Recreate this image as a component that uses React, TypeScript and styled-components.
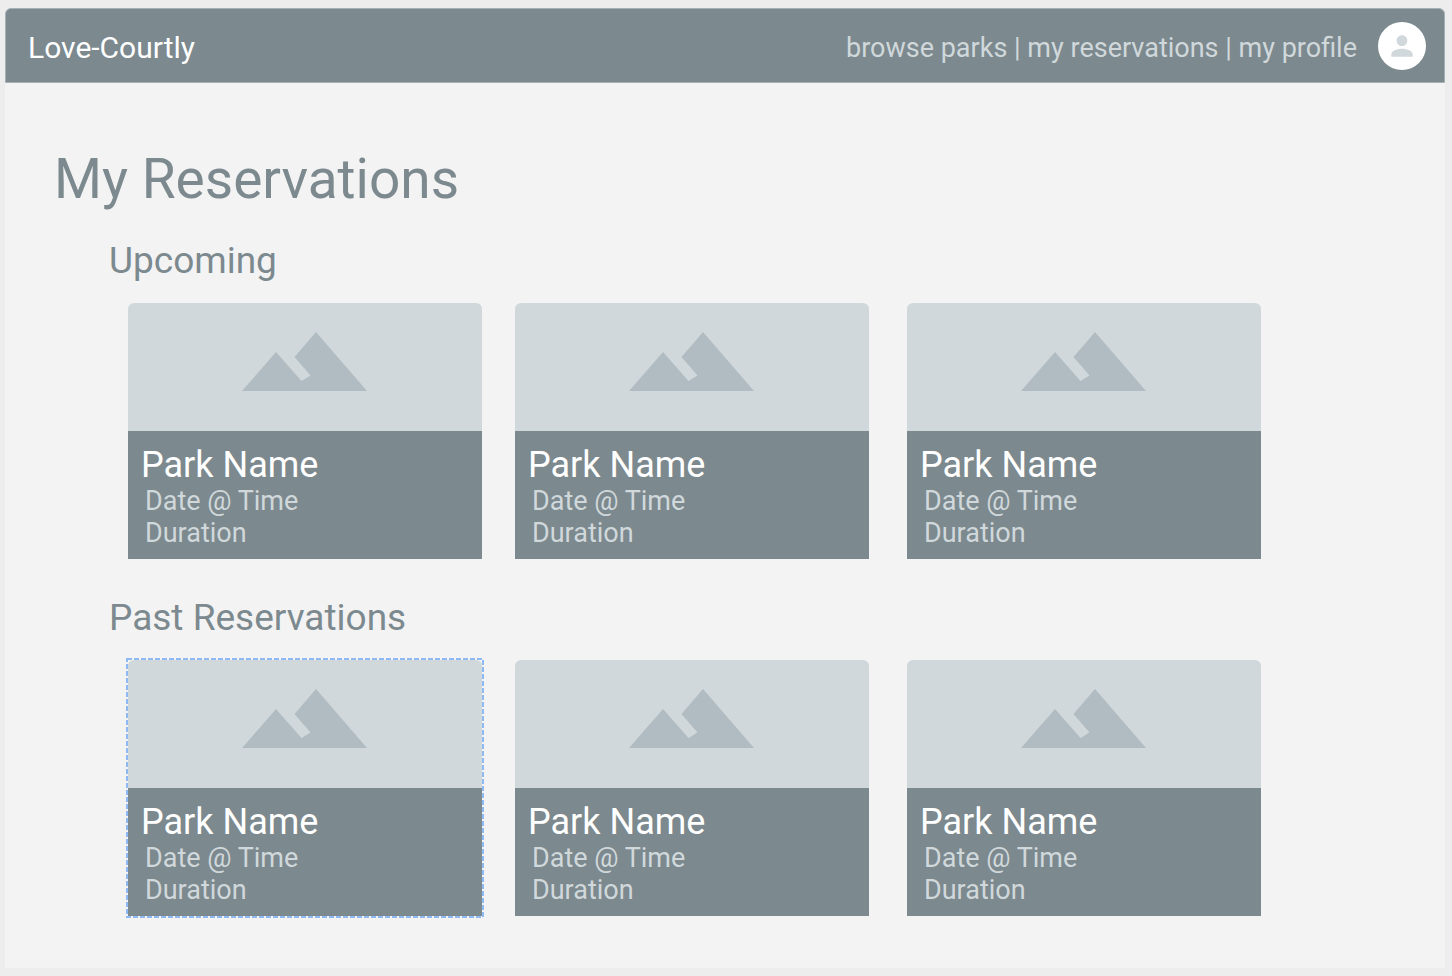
import React from "react";
import styled, { createGlobalStyle } from "styled-components";

const GlobalStyle = createGlobalStyle`
  * { box-sizing: border-box; }
  body {
    margin: 0;
    background: #ededed;
    font-family: Roboto, "Liberation Sans", sans-serif;
    color: #7c898e;
  }
`;

const Page = styled.div`
  min-height: 100vh;
  padding: 8px 7px 8px 5px;
  display: flex;
`;

const Frame = styled.div`
  flex: 1;
  min-width: 0;
  background: #f3f3f3;
  border-radius: 6px 6px 0 0;
`;

const TopBar = styled.header`
  display: flex;
  align-items: center;
  justify-content: space-between;
  height: 75px;
  padding: 0 18px 0 22px;
  background: #7c898e;
  border: 1px solid #a6b1b5;
  border-radius: 6px 6px 0 0;
`;

const Brand = styled.a`
  padding-top: 4px;
  font-size: 30px;
  line-height: 36px;
  color: #ffffff;
  text-decoration: none;
`;

const Account = styled.div`
  display: flex;
  align-items: center;
  gap: 21px;
`;

const Nav = styled.nav`
  padding-top: 4px;
  font-size: 27px;
  line-height: 36px;
  color: #d0d8db;
`;

const NavLink = styled.a`
  color: inherit;
  text-decoration: none;
`;

const Avatar = styled.button`
  display: flex;
  align-items: center;
  justify-content: center;
  width: 48px;
  height: 48px;
  padding: 0;
  border: 0;
  border-radius: 50%;
  background: #ffffff;
`;

const Main = styled.main`
  padding: 64px 0 52px;
`;

const Title = styled.h1`
  margin: 0 0 28px;
  padding-left: 49px;
  font-size: 55px;
  font-weight: 400;
  line-height: 64px;
`;

const Section = styled.section`
  & + & { margin-top: 37px; }
`;

const SectionTitle = styled.h2`
  margin: 0 0 20px;
  padding-left: 104px;
  font-size: 37px;
  font-weight: 400;
  line-height: 44px;
`;

const Cards = styled.div`
  display: grid;
  grid-template-columns: 387fr 392fr 354fr;
  padding: 0 184px 0 123px;
`;

const Card = styled.article`
  position: relative;
  width: 354px;
`;

const Photo = styled.div`
  display: flex;
  justify-content: center;
  height: 128px;
  padding-top: 29px;
  background: #d0d8db;
  border-radius: 6px 6px 0 0;
`;

const Details = styled.div`
  height: 128px;
  padding: 14px 13px 10px;
  background: #7c898e;
`;

const ParkName = styled.h3`
  margin: 0;
  font-size: 36px;
  font-weight: 400;
  line-height: 40px;
  color: #ffffff;
`;

const Detail = styled.p`
  margin: 0;
  padding-left: 4px;
  font-size: 27px;
  line-height: 32px;
  color: #d0d8db;
`;

const Selection = styled.svg`
  position: absolute;
  inset: -2px;
  width: calc(100% + 4px);
  height: calc(100% + 4px);
  overflow: visible;
  pointer-events: none;
`;

const Mountains = () => (
  <svg width="126" height="59" viewBox="0 0 126 59" aria-hidden="true">
    <path d="M0 59 34 20 59.5 49 68.5 43.5 52.5 25 74 0 125 59Z" fill="#b1bcc2" />
  </svg>
);

const Person = () => (
  <svg width="32" height="32" viewBox="0 0 24 24" aria-hidden="true">
    <path
      d="M12 12c2.21 0 4-1.79 4-4s-1.79-4-4-4-4 1.79-4 4 1.79 4 4 4zm0 2c-2.67 0-8 1.34-8 4v2h16v-2c0-2.66-5.33-4-8-4z"
      fill="#d0d8db"
    />
  </svg>
);

function ParkCard({ selected = false }: { selected?: boolean }) {
  return (
    <Card>
      <Photo>
        <Mountains />
      </Photo>
      <Details>
        <ParkName>Park Name</ParkName>
        <Detail>Date @ Time</Detail>
        <Detail>Duration</Detail>
      </Details>
      {selected && (
        <Selection aria-hidden="true">
          <rect x="1" y="1" width="356" height="258" fill="none" stroke="#8ebaf3" strokeWidth="2" strokeDasharray="5 2" />
        </Selection>
      )}
    </Card>
  );
}

export default function App() {
  return (
    <Page>
      <GlobalStyle />
      <Frame>
        <TopBar>
          <Brand href="#home">Love-Courtly</Brand>
          <Account>
            <Nav>
              <NavLink href="#parks">browse parks</NavLink> | <NavLink href="#reservations">my reservations</NavLink> |{" "}
              <NavLink href="#profile">my profile</NavLink>
            </Nav>
            <Avatar type="button" aria-label="Account">
              <Person />
            </Avatar>
          </Account>
        </TopBar>
        <Main>
          <Title>My Reservations</Title>
          <Section>
            <SectionTitle>Upcoming</SectionTitle>
            <Cards>
              <ParkCard />
              <ParkCard />
              <ParkCard />
            </Cards>
          </Section>
          <Section>
            <SectionTitle>Past Reservations</SectionTitle>
            <Cards>
              <ParkCard selected />
              <ParkCard />
              <ParkCard />
            </Cards>
          </Section>
        </Main>
      </Frame>
    </Page>
  );
}
